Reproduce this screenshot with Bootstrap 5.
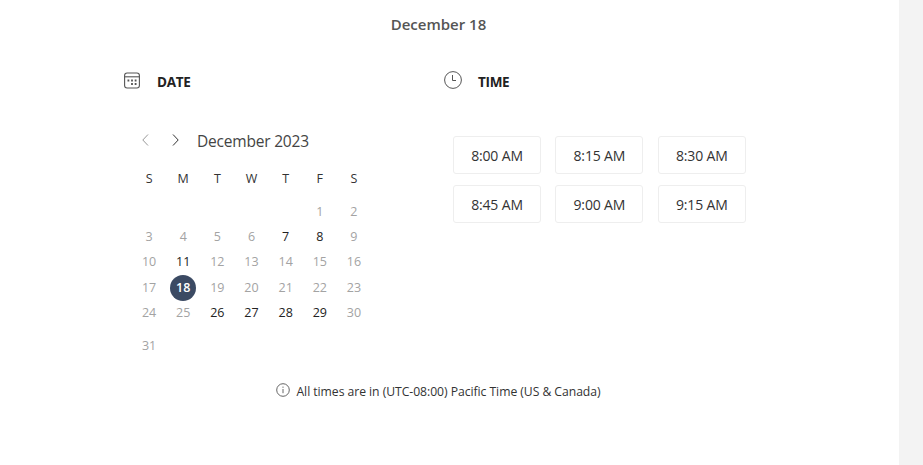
<!DOCTYPE html>
<html lang="en">
<head>
  <meta charset="UTF-8">
  <meta name="viewport" content="width=device-width, initial-scale=1.0">
  <title>Book a time</title>
  <link href="https://cdn.jsdelivr.net/npm/bootstrap@5.3.0/dist/css/bootstrap.min.css" rel="stylesheet">
  <style>
    body { font-family: "Open Sans", "Noto Sans", sans-serif; background: #f3f3f3; color: #333; }
    .booking { width: 899px; height: 465px; background: #fff; padding: 13px 135px 0 124px; }
    .picked-day { font-size: 15px; line-height: 22px; font-weight: 600; color: #555; padding-right: 11px; width: 640px; }
    .picker { width: 320px; }
    .picker-title { height: 22px; margin-top: 36px; font-size: 13.5px; font-weight: 700; letter-spacing: -.3px; color: #222; }
    .picker-title svg { margin: -4px 17px 0 0; }
    .picker-title .clock { margin-right: 16px; }
    .month-bar { height: 24px; margin: 35px 0 0 14px; font-size: 15.5px; letter-spacing: -.2px; color: #444; }
    .month-btn { width: 16px; height: 20px; line-height: 0; margin-right: 14px; }
    .month-label { margin-left: -1px; padding-top: 4px; }
    .days { width: 239px; margin: 14px 0 0 8px; font-size: 12.5px; line-height: 25.3px; table-layout: fixed; }
    .days th, .days td { padding: 0; text-align: center; font-weight: 400; color: #a3a3a3; }
    .days th { color: #333; }
    .days .spaced td { padding-top: 7.5px; }
    .days .open { color: #222; }
    .days .picked { display: block; width: 26px; height: 26px; margin: 0 auto -1px; background: #3b4a63; color: #fff; font-weight: 600; }
    .slots { margin: 43px 0 0 9px; width: 294px; display: grid; grid-template-columns: repeat(3, 88px); gap: 11px 14.4px; }
    .slot { height: 38px; padding: 0; border: 1px solid #eee; border-radius: 3px; font-size: 14px; letter-spacing: -.15px; color: #333; }
    .zone { width: 629px; margin-top: 22px; height: 24px; font-size: 12.2px; letter-spacing: -.05px; color: #333; }
    .zone svg { margin: -4px 6px 0 0; }
  </style>
</head>
<body>

<main class="booking">
  <h1 class="picked-day text-center mb-0"><span>December 18</span></h1>

  <div class="d-flex">
    <section class="picker">
      <div class="picker-title d-flex align-items-center">
        <svg width="16" height="17" viewBox="0 0 16 17" fill="none" stroke="#555" stroke-width="1.1">
          <rect x=".6" y="1" width="14.8" height="15" rx="2.5"/>
          <path d="M.6 4.8h14.8"/>
          <path d="M3.5 8.5h1.8M7.1 8.5h1.8M10.7 8.5h1.8M7.1 12h1.8M10.7 12h1.8" stroke-width="1.8"/>
        </svg>
        <span>DATE</span>
      </div>
      <div class="month-bar d-flex align-items-center">
        <button class="month-btn btn p-0 border-0" type="button" aria-label="Previous month">
          <svg width="16" height="16" viewBox="0 0 16 16" fill="none" stroke="#999"><path d="M10 2.5 4.8 8l5.2 5.5"/></svg>
        </button>
        <button class="month-btn btn p-0 border-0" type="button" aria-label="Next month">
          <svg width="16" height="16" viewBox="0 0 16 16" fill="none" stroke="#333"><path d="M5 2.5 10.2 8 5 13.5"/></svg>
        </button>
        <span class="month-label">December 2023</span>
      </div>
      <table class="days">
        <thead>
          <tr><th>S</th><th>M</th><th>T</th><th>W</th><th>T</th><th>F</th><th>S</th></tr>
        </thead>
        <tbody>
          <tr class="spaced"><td></td><td></td><td></td><td></td><td></td><td>1</td><td>2</td></tr>
          <tr><td>3</td><td>4</td><td>5</td><td>6</td><td class="open">7</td><td class="open">8</td><td>9</td></tr>
          <tr><td>10</td><td class="open">11</td><td>12</td><td>13</td><td>14</td><td>15</td><td>16</td></tr>
          <tr><td>17</td><td><span class="picked rounded-circle">18</span></td><td>19</td><td>20</td><td>21</td><td>22</td><td>23</td></tr>
          <tr><td>24</td><td>25</td><td class="open">26</td><td class="open">27</td><td class="open">28</td><td class="open">29</td><td>30</td></tr>
          <tr class="spaced"><td>31</td><td></td><td></td><td></td><td></td><td></td><td></td></tr>
        </tbody>
      </table>
    </section>

    <section class="picker">
      <div class="picker-title d-flex align-items-center">
        <svg class="clock" width="18" height="18" viewBox="0 0 18 18" fill="none" stroke="#555">
          <circle cx="9" cy="9" r="8.4"/>
          <path d="M8.5 4v5.5H12"/>
        </svg>
        <span>TIME</span>
      </div>
      <div class="slots">
        <button class="slot btn" type="button">8:00 AM</button>
        <button class="slot btn" type="button">8:15 AM</button>
        <button class="slot btn" type="button">8:30 AM</button>
        <button class="slot btn" type="button">8:45 AM</button>
        <button class="slot btn" type="button">9:00 AM</button>
        <button class="slot btn" type="button">9:15 AM</button>
      </div>
    </section>
  </div>

  <div class="zone d-flex align-items-center justify-content-center">
    <svg width="14" height="14" viewBox="0 0 14 14" fill="none" stroke="#555" stroke-width=".9">
      <circle cx="7" cy="7" r="6.3"/>
      <path d="M7 6v4.2M7 3.6v1.2"/>
    </svg>
    <span>All times are in (UTC-08:00) Pacific Time (US &amp; Canada)</span>
  </div>
</main>

<script src="https://cdn.jsdelivr.net/npm/bootstrap@5.3.0/dist/js/bootstrap.bundle.min.js"></script>
</body>
</html>
